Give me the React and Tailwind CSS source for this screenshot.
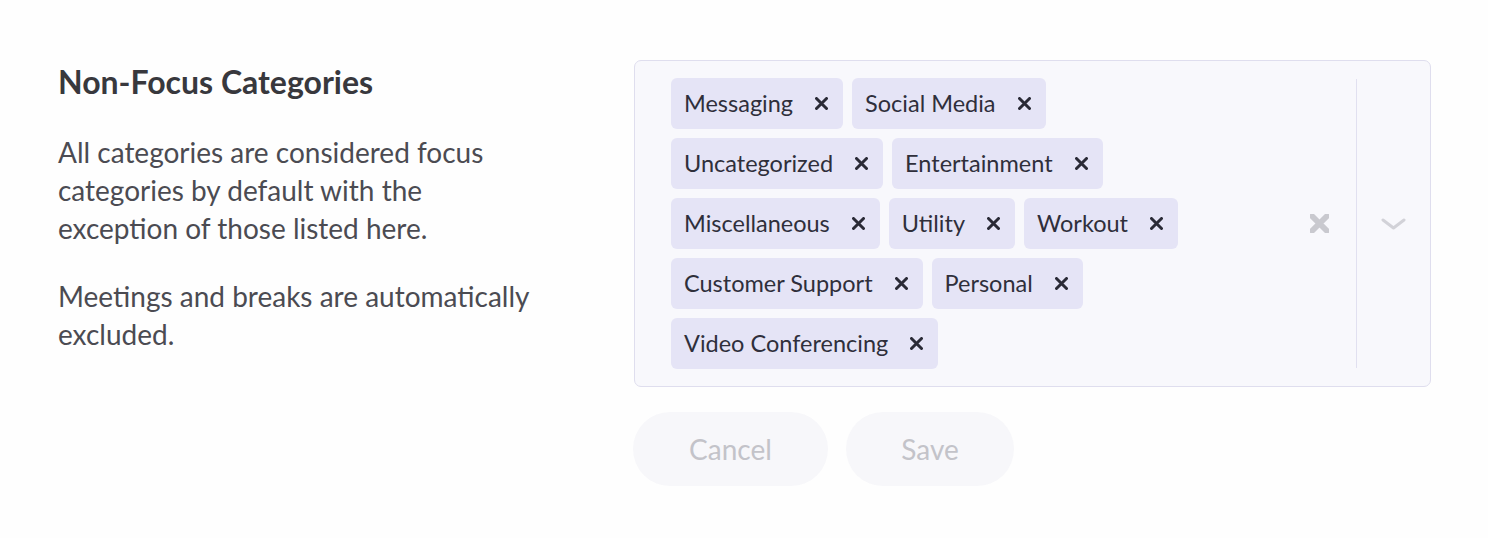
import React from "react";

const rows = [
  ["Messaging", "Social Media"],
  ["Uncategorized", "Entertainment"],
  ["Miscellaneous", "Utility", "Workout"],
  ["Customer Support", "Personal"],
  ["Video Conferencing"],
];

function XIcon({ className, size = 13, stroke = 3 }) {
  return (
    <svg width={size} height={size} viewBox="0 0 13 13" className={className}>
      <path d="M1.5 1.5 L11.5 11.5 M11.5 1.5 L1.5 11.5" stroke="currentColor" strokeWidth={stroke} strokeLinecap="round" fill="none" />
    </svg>
  );
}

function Tag({ label }) {
  return (
    <div className="flex h-[51px] items-center rounded-[6px] bg-[#e5e4f6] pl-[13px] pr-[15px]">
      <span className="text-[23.5px] leading-none text-[#2f2f3b]">{label}</span>
      <XIcon className="ml-[22px] text-[#2a2a36]" />
    </div>
  );
}

export default function App() {
  return (
    <div
      className="flex h-[538px] w-[1488px] bg-[#fefefe] pl-[58px] pt-[60px]"
      style={{ fontFamily: "Lato, 'Open Sans', sans-serif" }}
    >
      <div className="w-[576px] pt-[2px]">
        <h2 className="text-[32px] font-bold leading-[40px] text-[#38383d]">Non-Focus Categories</h2>
        <p className="mt-[31px] w-[482px] text-[28px] leading-[38px] text-[#4b4b52]">
          All categories are considered focus categories by default with the exception of those listed here.
        </p>
        <p className="mt-[30px] w-[482px] text-[28px] leading-[38px] text-[#4b4b52]">
          Meetings and breaks are automatically excluded.
        </p>
      </div>
      <div className="flex w-[797px] flex-col">
        <div className="flex h-[327px] rounded-[7px] border border-[#dfdeee] bg-[#f8f8fc] pl-[36px] pt-[17px] pb-[17px]">
          <div className="flex flex-1 flex-col gap-[9px]">
            {rows.map((r, i) => (
              <div key={i} className="flex gap-[9px]">
                {r.map((t) => (
                  <Tag key={t} label={t} />
                ))}
              </div>
            ))}
          </div>
          <div className="flex items-center pr-[27px]">
            <XIcon className="text-[#c9c9cf]" size={19} stroke={4} />
          </div>
          <div className="my-[1px] w-px bg-[#e1e0f0]" />
          <div className="flex w-[73px] items-center justify-center">
            <svg width="25" height="14" viewBox="0 0 25 14">
              <path d="M2 3 L12.5 11 L23 3" stroke="#d2d2d8" strokeWidth="3" fill="none" strokeLinecap="round" strokeLinejoin="round" />
            </svg>
          </div>
        </div>
        <div className="mt-[25px] flex gap-[18px]">
          <button className="-ml-[1px] h-[74px] w-[195px] rounded-full bg-[#f7f7fa] text-[28px] text-[#c3c3c9]">Cancel</button>
          <button className="h-[74px] w-[168px] rounded-full bg-[#f7f7fa] text-[28px] text-[#c3c3c9]">Save</button>
        </div>
      </div>
    </div>
  );
}
